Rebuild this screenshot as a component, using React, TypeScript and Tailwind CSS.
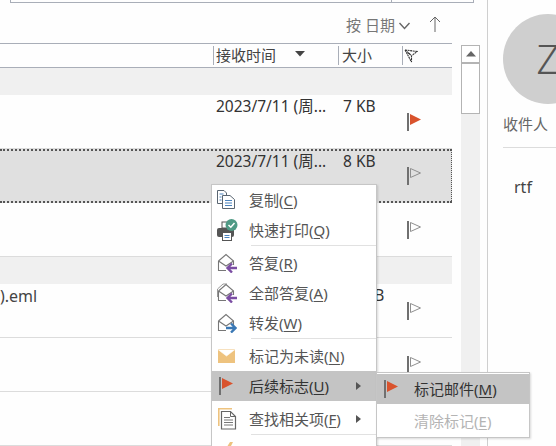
import React from "react";

const FONT = "font-['Noto_Sans','Noto_Sans_CJK_SC',sans-serif]";

function Flag({ red }: { red?: boolean }) {
  return (
    <svg width="17" height="20" viewBox="0 0 17 20" className="block">
      <rect x="1" y="1" width="2" height="18" fill="#707070" />
      {red ? (
        <path d="M4 2 L15 7.5 L4 13 Z" fill="#d9532d" />
      ) : (
        <path d="M4.5 2.5 L14.5 7 L4.5 11.5 Z" fill="none" stroke="#8f8f8f" strokeWidth="1" />
      )}
    </svg>
  );
}

function Row({
  date,
  size,
  flag,
  name,
  selected,
}: {
  date?: string;
  size?: string;
  flag?: "red" | "empty";
  name?: string;
  selected?: boolean;
}) {
  return (
    <div
      className={
        "flex h-[54px] text-[15.5px] leading-[22px] text-[#333] " +
        (selected
          ? "bg-[#e0e0e0] border-y-2 border-r border-dotted border-[#555]"
          : "border-b border-[#dcdcdc]")
      }
    >
      <div className={"w-[216px] shrink-0 overflow-hidden text-[16px] text-[#444] " + (selected ? "" : "pt-px")}>
        {name && <span className="block">{name}</span>}
      </div>
      <div className={"w-[123px] shrink-0 whitespace-nowrap " + (selected ? "-mt-px" : "")}>{date}</div>
      <div className={"w-[64px] shrink-0 whitespace-nowrap pl-[4px] " + (selected ? "-mt-px" : "")}>{size}</div>
      <div className={"flex-1 pl-[3px] " + (selected ? "pt-[15px]" : "pt-[17px]")}>
        {flag && <Flag red={flag === "red"} />}
      </div>
    </div>
  );
}

function Band() {
  return <div className="h-[27px] bg-[#f0f0f0]" />;
}

function Sep() {
  return <div className="ml-[39px] h-px bg-[#e1e1e1]" />;
}

function Key({ k }: { k: string }) {
  return (
    <>
      (<span className="underline underline-offset-2">{k}</span>)
    </>
  );
}

function MenuItem({
  icon,
  label,
  k,
  arrow,
  active,
  disabled,
  h = "h-[30px]",
}: {
  icon?: React.ReactNode;
  label: string;
  k: string;
  arrow?: boolean;
  active?: boolean;
  disabled?: boolean;
  h?: string;
}) {
  return (
    <div
      className={
        "flex items-center text-[15px] " +
        h +
        " " +
        (active ? "bg-[#c4c4c4] text-[#333] " : disabled ? "text-[#b4b4b4] " : "text-[#555] ")
      }
    >
      <div className="flex w-[37px] shrink-0 justify-start pl-[5px]">{icon}</div>
      <div className="flex-1 whitespace-nowrap">
        {label}
        <Key k={k} />
      </div>
      {arrow && (
        <svg width="6" height="8" viewBox="0 0 6 8" className="mr-[14px]">
          <path d="M0 0 L5 4 L0 8 Z" fill="#555" />
        </svg>
      )}
    </div>
  );
}

const Copy = (
  <svg width="20" height="20" viewBox="0 0 20 20" fill="none" stroke="#5a6672" strokeWidth="1">
    <path d="M0.5 0.5H7L9.5 3V5.5M0.5 0.5V13.5H5.5" />
    <path d="M5.5 5.5H13L17.5 9.5V18.5H5.5Z" fill="#fff" />
    <path d="M2.5 4H6.5M2.5 7H4.5M2.5 10H4.5" stroke="#4b83bd" />
    <path d="M8 10.5H15M8 13H15M8 15.5H15" stroke="#4b83bd" />
  </svg>
);

const Print = (
  <svg width="21" height="23" viewBox="0 0 21 23">
    <rect x="5" y="3" width="8" height="6" fill="#fff" stroke="#555" />
    <rect x="0" y="9" width="17" height="9" rx="2" fill="#555" />
    <rect x="5.5" y="13.5" width="9" height="8" fill="#fff" stroke="#555" />
    <path d="M7.5 16.5H12.5M7.5 18.5H12.5" stroke="#4b83bd" />
    <circle cx="14.5" cy="6" r="6" fill="#4f9a85" />
    <path d="M11.5 6 L13.8 8.2 L17.5 4" stroke="#fff" strokeWidth="1.5" fill="none" />
  </svg>
);

function Envelope({ arrow, back }: { arrow: string; back?: boolean }) {
  return (
    <svg width="20" height="20" viewBox="0 0 20 20" fill="none">
      {back && <path d="M0.5 14 V6 L6 1 H10" stroke="#999" />}
      <path d="M1.5 8 L9 1.5 L16.5 8 V12 M1.5 8 V17.5 H9" stroke="#777" strokeWidth="1.1" />
      <path d="M1.5 8 L9 13 L16.5 8" stroke="#777" strokeWidth="1.1" />
      {arrow === "left" ? (
        <path d="M20 15 H11 M15 10.5 L10.5 15 L15 19.5" stroke="#7b4ea3" strokeWidth="2.4" />
      ) : (
        <path d="M9 15 H18 M14 10.5 L18.5 15 L14 19.5" stroke="#3a78b5" strokeWidth="2.4" />
      )}
    </svg>
  );
}

const Mail = (
  <svg width="17" height="14" viewBox="0 0 17 14" className="ml-px">
    <rect width="17" height="14" fill="#eec37f" />
    <path d="M0 0.5 L8.5 7 L17 0.5" fill="#fff" stroke="#fff" strokeWidth="0.6" />
  </svg>
);

const Related = (
  <svg width="20" height="22" viewBox="0 0 20 22" fill="none" className="ml-px">
    <path d="M0.8 18 V0.8 H14" stroke="#eec37f" strokeWidth="1.6" />
    <path d="M3.5 3.5 H12.5 L17.5 8.5 V21 H3.5 Z" fill="#fff" stroke="#666" strokeWidth="1.2" />
    <path d="M12.5 3.5 V8.5 H17.5" stroke="#666" />
    <path d="M6 9.5H12M6 12H15M6 14.5H15M6 17H15" stroke="#777" />
  </svg>
);

export default function App() {
  return (
    <div className={"relative h-[446px] w-[556px] overflow-hidden bg-[#fefefe] " + FONT}>
      <div className="flex h-full">
        <div className="w-[488px] shrink-0 border-r border-[#cfcfcf]">
          <div className="ml-[10px] mr-[13px] h-[3px] border-x border-b border-[#a9aeb8] relative">
            <div className="absolute left-[380px] top-0 h-full w-px bg-[#a9aeb8]" />
          </div>
          <div className="flex h-[40px] items-end pb-[8px] pl-[346px] text-[15px] leading-[20px] text-[#777]">
            <span>按 日期</span>
            <svg width="14" height="8" viewBox="0 0 14 8" className="mb-[5px] ml-[3px]" fill="none" stroke="#666" strokeWidth="1.4">
              <path d="M1.5 1 L6.5 6.5 L11.5 1" />
            </svg>
            <svg width="12" height="17" viewBox="0 0 12 17" className="ml-[17px] mb-[2px]" fill="none" stroke="#666" strokeWidth="1">
              <path d="M6 16 V1 M1 6 L6 1 L11 6" />
            </svg>
          </div>
          <div className="flex">
            <div className="w-[452px] shrink-0">
              <div className="flex h-[25px] items-center border-y border-[#a9aeb8] text-[15px] text-[#444]">
                <div className="h-[19px] w-[214px] shrink-0 border-r border-[#a9aeb8]" />
                <div className="flex h-[19px] w-[125px] shrink-0 items-center border-r border-[#a9aeb8] pl-[2px] leading-[19px]">
                  接收时间
                  <svg width="10" height="6" viewBox="0 0 10 6" className="ml-[19px] mb-[3px]">
                    <path d="M0 0 H10 L5 5.5 Z" fill="#444" />
                  </svg>
                </div>
                <div className="h-[19px] w-[64px] shrink-0 border-r border-[#a9aeb8] pl-[3px] leading-[19px]">大小</div>
                <svg width="14" height="16" viewBox="0 0 14 16" className="ml-[1px]" fill="none" stroke="#333" strokeWidth="1.1" strokeDasharray="2 0.6">
                  <path d="M1 2 L13 3.5 L8 7.5 M1 2 L6 6 M1 2 L7.5 14 V7.5 L4 5" />
                </svg>
              </div>
              <Band />
              <Row date="2023/7/11 (周..." size="7 KB" flag="red" />
              <Row date="2023/7/11 (周..." size="8 KB" flag="empty" selected />
              <Row flag="empty" />
              <Band />
              <Row name=").eml" size="14 KB" flag="empty" />
              <Row flag="empty" />
              <Row />
            </div>
            <div className="ml-[9px] mt-[2px] w-[19px] shrink-0 bg-[#f0f0f0]">
              <div className="flex h-[18px] items-center justify-center border border-[#b4b4b4] bg-white">
                <svg width="10" height="6" viewBox="0 0 10 6">
                  <path d="M5 0 L10 5.5 H0 Z" fill="#666" />
                </svg>
              </div>
              <div className="h-[51px] border border-[#b4b4b4] bg-white" />
            </div>
          </div>
        </div>
        <div className="flex-1 min-w-0 overflow-hidden pl-[15px]">
          <div className="mt-[14px] flex h-[90px] w-[90px] items-center justify-center rounded-full bg-[#cfcfcf]">
            <span className="text-[40px] font-light leading-none text-[#555]">Z</span>
          </div>
          <div className="mt-[10px] text-[15px] leading-[20px] text-[#666]">收件人</div>
          <div className="mt-[13px] h-px bg-[#dcdcdc]" />
          <div className="mt-[27px] pl-[11px] text-[16px] leading-[24px] text-[#444]">rtf</div>
        </div>
      </div>

      <div className="absolute left-[211px] top-[184px] h-[270px] w-[166px] border border-[#c6c6c6] bg-white shadow-[1px_1px_2px_rgba(0,0,0,0.15)]">
        <MenuItem icon={Copy} label="复制" k="C" />
        <MenuItem icon={Print} label="快速打印" k="Q" />
        <Sep />
        <div className="h-[2px]" />
        <MenuItem icon={<Envelope arrow="left" />} label="答复" k="R" />
        <MenuItem icon={<Envelope arrow="left" back />} label="全部答复" k="A" />
        <MenuItem icon={<Envelope arrow="right" />} label="转发" k="W" />
        <Sep />
        <div className="h-[2px]" />
        <MenuItem icon={Mail} label="标记为未读" k="N" />
        <MenuItem icon={<div className="ml-px"><Flag red /></div>} label="后续标志" k="U" arrow active />
        <div className="h-[3px]" />
        <MenuItem icon={Related} label="查找相关项" k="F" arrow />
        <Sep />
        <svg width="12" height="8" viewBox="0 0 12 8" className="ml-[10px] mt-[7px] block">
          <path d="M3 8 L8 0 H11 L7 8 Z" fill="#eec37f" />
        </svg>
      </div>

      <div className="absolute left-[376px] top-[372px] h-[66px] w-[154px] border border-[#c6c6c6] bg-white py-px shadow-[1px_1px_2px_rgba(0,0,0,0.15)]">
        <MenuItem icon={<div className="ml-px"><Flag red /></div>} label="标记邮件" k="M" active />
        <MenuItem label="清除标记" k="E" disabled h="h-[34px]" />
      </div>
    </div>
  );
}
